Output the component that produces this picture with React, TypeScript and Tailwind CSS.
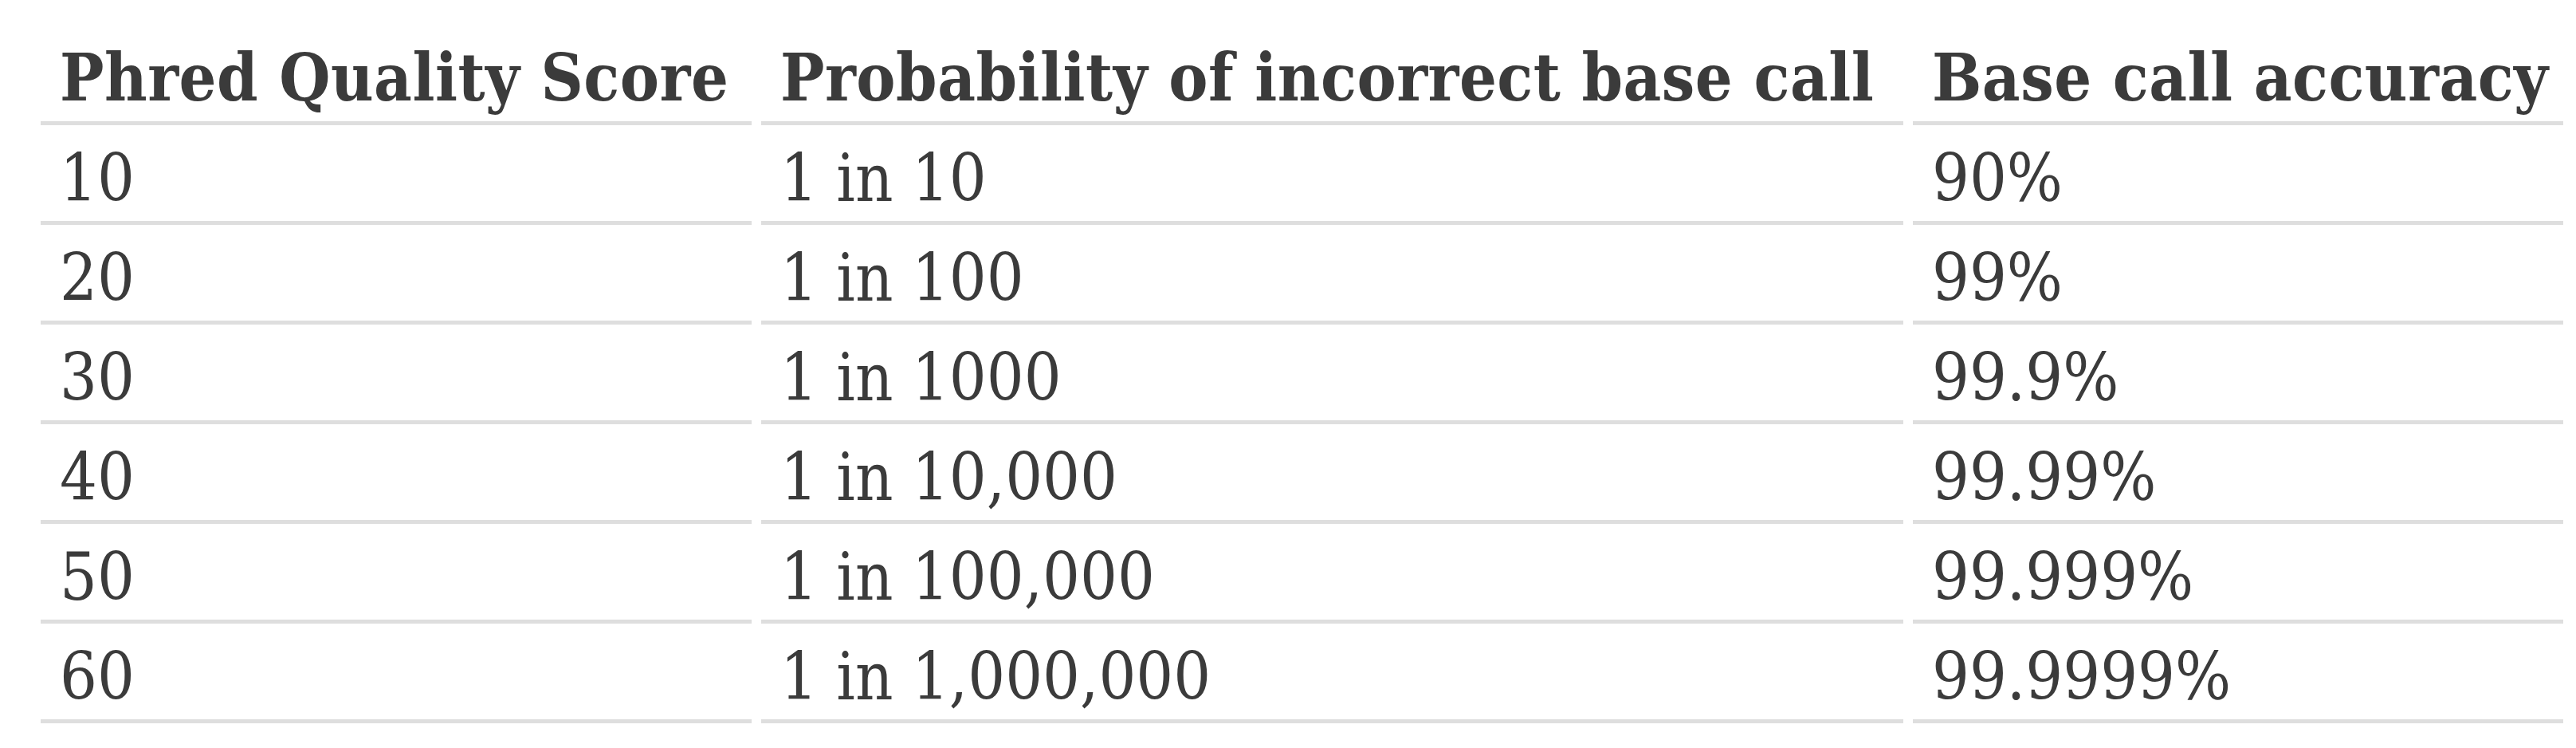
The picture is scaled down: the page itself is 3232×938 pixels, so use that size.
const header = ['Phred Quality Score', 'Probability of incorrect base call', 'Base call accuracy'];

const rows = [
  ['10', '1 in 10', '90%'],
  ['20', '1 in 100', '99%'],
  ['30', '1 in 1000', '99.9%'],
  ['40', '1 in 10,000', '99.99%'],
  ['50', '1 in 100,000', '99.999%'],
  ['60', '1 in 1,000,000', '99.9999%'],
];

export default function App() {
  return (
    <div className="min-h-screen bg-white pl-[51px] pt-[32px] font-['DejaVu_Serif_Condensed','DejaVu_Serif',serif] font-stretch-semi-condensed text-[82px] leading-none text-[#3b3b3b]">
      <div className="grid grid-cols-[892px_1433px_816px] gap-x-[12px]">
        {header.map((h) => (
          <div key={h} className="flex h-[125px] items-end whitespace-nowrap border-b-[5px] border-[#dedede] pb-[14px] pl-[24px] font-bold tracking-[0.5px]">
            {h}
          </div>
        ))}
        {rows.map((row) =>
          row.map((cell, i) => (
            <div key={row[0] + i} className="flex h-[125px] items-end whitespace-nowrap border-b-[5px] border-[#dedede] pb-[12px] pl-[24px]">
              {cell}
            </div>
          ))
        )}
      </div>
    </div>
  );
}
